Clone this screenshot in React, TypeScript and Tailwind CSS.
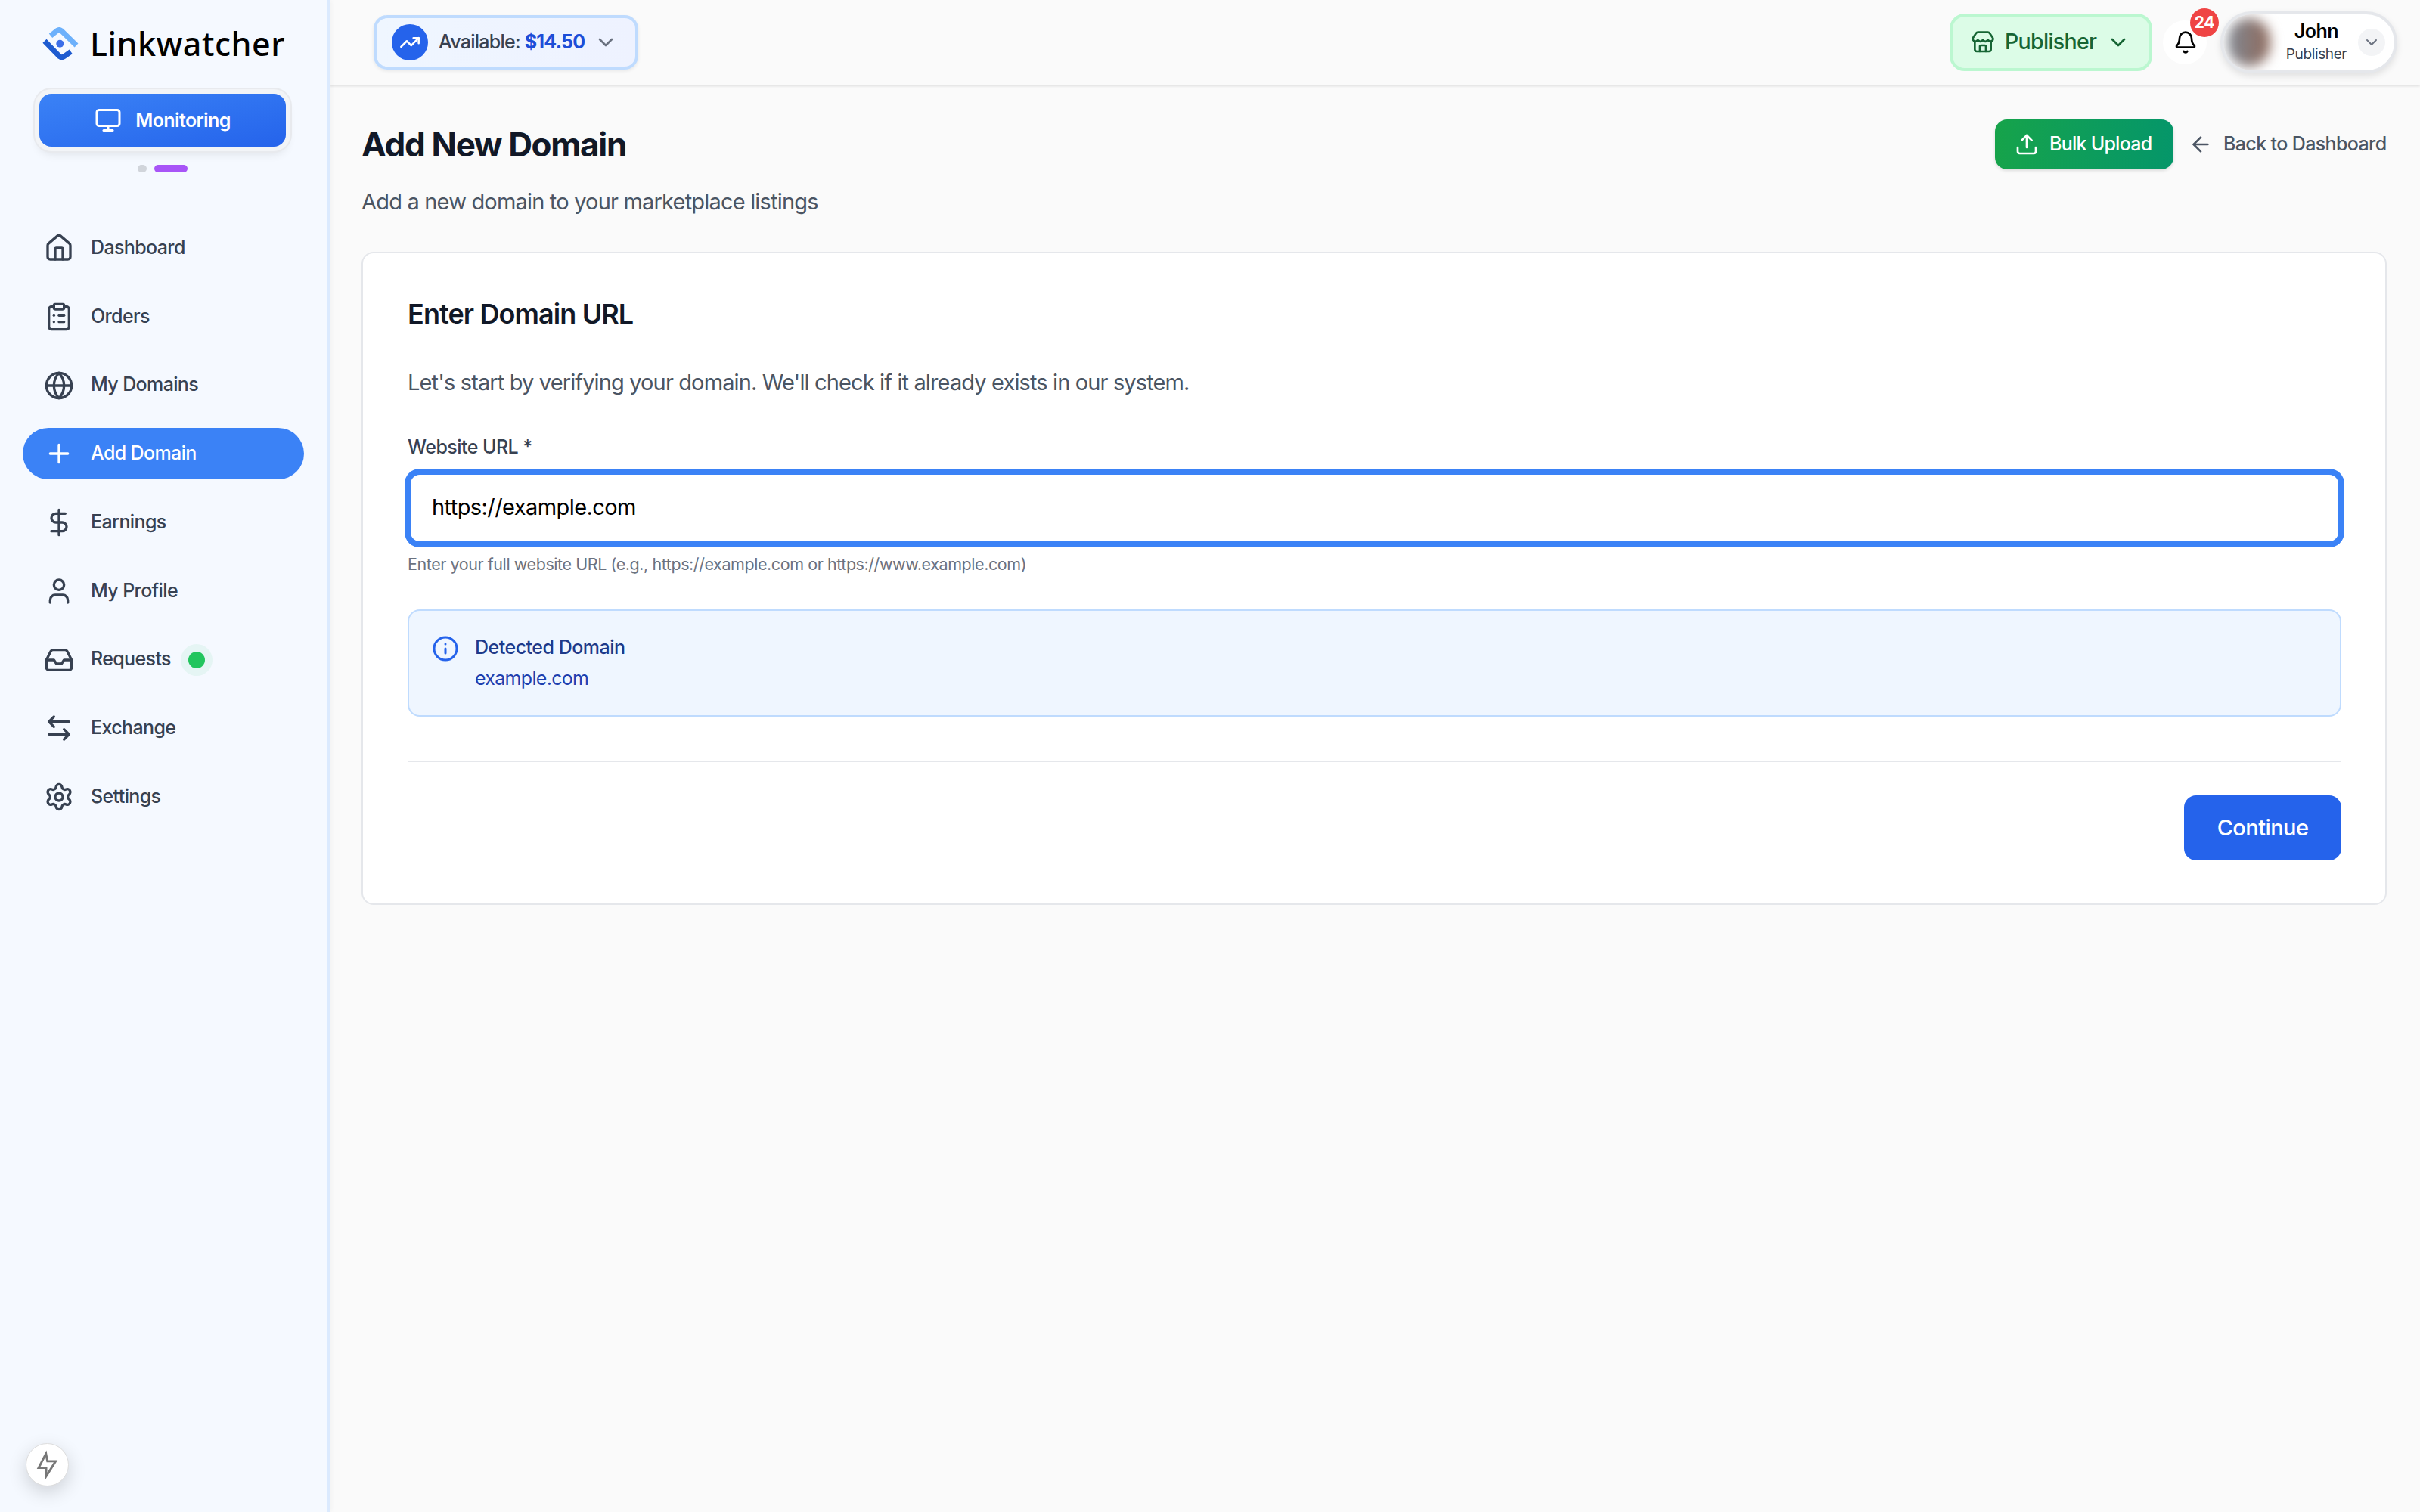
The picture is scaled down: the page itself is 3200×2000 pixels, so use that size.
import { House, ClipboardList, Globe, Plus, DollarSign, User, Inbox, ArrowLeftRight, Settings, Monitor, TrendingUp, ChevronDown, Store, Bell, Upload, ArrowLeft, Info } from "lucide-react";

const font = "[font-family:Inter,'Liberation_Sans',sans-serif]";

const nav = [
  { label: "Dashboard", Icon: House },
  { label: "Orders", Icon: ClipboardList },
  { label: "My Domains", Icon: Globe },
  { label: "Add Domain", Icon: Plus, active: true },
  { label: "Earnings", Icon: DollarSign },
  { label: "My Profile", Icon: User },
  { label: "Requests", Icon: Inbox, dot: true },
  { label: "Exchange", Icon: ArrowLeftRight },
  { label: "Settings", Icon: Settings },
];

function Logo() {
  return (
    <svg width="48" height="44" viewBox="0 0 48 44" fill="none">
      <path d="M11 11.3 L19.5 4.5 Q22.3 2.6 25 4.5 L45 24" stroke="#6db1fb" strokeWidth="7" />
      <path d="M3 18.3 L22.5 38.5 Q25.7 41 29 38.5 L37.7 32.3" stroke="#1e5bd0" strokeWidth="7" />
      <circle cx="23.3" cy="21.7" r="5" fill="#3b6ee8" />
    </svg>
  );
}

export default function App() {
  return (
    <div className={`flex h-[2000px] w-[3200px] overflow-hidden bg-[#fafafa] ${font}`}>
      <aside className="relative z-10 flex w-[436px] shrink-0 flex-col border-r-4 border-[#dbeafe] bg-[#f5f9ff] shadow-[2px_0_6px_rgba(0,0,0,0.04)]">
        <div className="flex h-[116px] items-start gap-[15px] pl-[56px] pt-[36px]">
          <Logo />
          <span className="text-[43px] leading-[44px] font-medium tracking-[0.012em] text-black [font-family:'Noto_Sans',sans-serif]">Linkwatcher</span>
        </div>
        <div className="px-[52px] pr-[54px] pt-[8px]">
          <div className="flex h-[70px] items-center justify-center gap-[18px] rounded-[16px] bg-gradient-to-br from-[#3b82f6] to-[#2563eb] text-white shadow-[0_0_0_6px_#f2f4f7,0_0_0_8px_#e8eaee,0_8px_14px_rgba(0,0,0,0.12)]">
            <Monitor size={36} strokeWidth={2} />
            <span className="pt-[2px] text-[25px] font-semibold tracking-[-0.025em]">Monitoring</span>
          </div>
        </div>
        <div className="flex justify-center gap-[10px] pr-[2px] pt-[24px]">
          <span className="h-[10px] w-[12px] rounded-full bg-[#d1d5db]" />
          <span className="h-[10px] w-[44px] rounded-full bg-[#a855f7]" />
        </div>
        <nav className="flex flex-col gap-[22.75px] pl-[30px] pr-[30px] pt-[66px]">
          {nav.map(({ label, Icon, active, dot }) => (
            <div key={label} className={`flex h-[68px] items-center gap-[22px] rounded-full pl-[28px] ${active ? "bg-[#3b82f6] text-white" : "text-[#374151]"}`}>
              <Icon size={40} strokeWidth={2} className="shrink-0" />
              <span className="pb-[1px] text-[25px] font-medium tracking-[-0.025em]">{label}</span>
              {dot && (
                <span className="-ml-[9px] flex h-[42px] w-[42px] items-center justify-center rounded-full bg-[#22c55e]/[0.07]">
                  <span className="h-[22px] w-[22px] rounded-full bg-[#22c55e]" />
                </span>
              )}
            </div>
          ))}
        </nav>
        <div className="absolute left-[34px] top-[1909px] flex h-[57px] w-[57px] items-center justify-center rounded-full border border-[#dddddd] bg-white shadow-[0_8px_24px_rgba(0,0,0,0.16)]">
          <svg width="57" height="57" viewBox="0 0 57 57" fill="none">
            <path d="M26.7 13.3 L16.7 32.7 H27 V44.3 L40 23.7 H28.7 Z" stroke="#777777" strokeWidth="3" />
          </svg>
        </div>
      </aside>

      <main className="flex min-w-0 flex-1 flex-col">
        <header className="flex h-[112px] shrink-0 items-center justify-between pl-[58px] pr-[30px] shadow-[0_2px_3px_rgba(0,0,0,0.12)]">
          <div className="flex h-[72px] w-[350px] items-center rounded-[18px] border-4 border-[#bfdbfe] bg-gradient-to-r from-[#eff6ff] to-[#eef2ff] pl-[20px] shadow-[0_2px_4px_rgba(0,0,0,0.08)]">
            <span className="flex h-[48px] w-[48px] shrink-0 items-center justify-center rounded-full bg-[#2563eb] text-white">
              <TrendingUp size={28} strokeWidth={2.2} />
            </span>
            <span className="ml-[14px] whitespace-nowrap text-[25px] font-medium tracking-[-0.03em] text-[#374151]">
              Available: <span className="font-bold text-[#1d4ed8]">$14.50</span>
            </span>
            <ChevronDown size={32} strokeWidth={2} className="ml-[12px] text-[#6b7280]" />
          </div>
          <div className="flex items-center">
            <div className="flex h-[76px] w-[268px] items-center rounded-[20px] border-4 border-[#bbf7d0] bg-[#dcfce7] pl-[24px] text-[#166534]">
              <Store size={32} strokeWidth={2} />
              <span className="ml-[13px] pb-[2px] text-[28.5px] font-medium tracking-[-0.025em]">Publisher</span>
              <ChevronDown size={32} strokeWidth={2} className="ml-[13px]" />
            </div>
            <div className="relative ml-[14px] flex h-[58px] w-[58px] items-center justify-center rounded-full bg-white pl-[2px] text-black">
              <Bell size={32} strokeWidth={2} />
              <span className="absolute left-[36px] top-[-16px] flex h-[38px] w-[38px] items-center justify-center rounded-full bg-[#ef4444] text-[21px] font-bold tracking-[-0.02em] text-white">24</span>
            </div>
            <div className="ml-[18px] flex h-[82px] w-[234px] items-center overflow-hidden rounded-full border-4 border-[#e5e7eb] bg-white shadow-[0_4px_10px_rgba(0,0,0,0.1)]">
              <span className="ml-[6px] h-[64px] w-[56px] shrink-0 rounded-full bg-gradient-to-r from-[#7f8791] to-[#8f6a5c] blur-[8px]" />
              <div className="ml-[18px] flex w-[86px] shrink-0 flex-col items-center">
                <span className="text-[25px] leading-[30px] font-semibold tracking-[-0.02em] text-black">John</span>
                <span className="mt-[2px] text-[19px] leading-[28px] tracking-[-0.02em] text-[#374151]">Publisher</span>
              </div>
              <span className="ml-[12px] flex h-[36px] w-[36px] shrink-0 items-center justify-center rounded-full bg-[#f3f4f6] text-[#6b7280]">
                <ChevronDown size={24} strokeWidth={2} />
              </span>
            </div>
          </div>
        </header>

        <div className="pl-[42px] pr-[44px] pt-[46px]">
          <div className="flex items-start justify-between">
            <div>
              <h1 className="text-[44px] leading-[66px] font-bold tracking-[-0.03em] text-[#111827]">Add New Domain</h1>
              <p className="mt-[23px] text-[29px] leading-[40px] tracking-[-0.028em] text-[#4b5563]">Add a new domain to your marketplace listings</p>
            </div>
            <div className="flex items-center">
              <div className="flex h-[66px] w-[236px] items-center rounded-[16px] bg-gradient-to-r from-[#16a34a] to-[#059669] pl-[26px] text-white shadow-[0_2px_4px_rgba(0,0,0,0.12)]">
                <Upload size={32} strokeWidth={2} />
                <span className="ml-[14px] pb-[1px] text-[25px] font-medium tracking-[-0.03em]">Bulk Upload</span>
              </div>
              <div className="ml-[20px] flex w-[262px] items-center text-[#4b5563]">
                <ArrowLeft size={32} strokeWidth={2} />
                <span className="ml-[14px] whitespace-nowrap pb-[1px] text-[25px] font-medium tracking-[-0.025em]">Back to Dashboard</span>
              </div>
            </div>
          </div>

          <section className="mt-[46px] rounded-[16px] border-2 border-[#e5e7eb] bg-white pb-[57px] pl-[59px] pr-[58px] pt-[57px]">
            <h2 className="text-[36px] leading-[46px] pb-[2px] font-semibold tracking-[-0.025em] text-[#111827]">Enter Domain URL</h2>
            <p className="mt-[46px] text-[29px] leading-[40px] tracking-[-0.03em] text-[#4b5563]">Let's start by verifying your domain. We'll check if it already exists in our system.</p>
            <label className="mt-[49px] block text-[25px] leading-[32px] font-medium tracking-[-0.022em] text-[#374151]">Website URL *</label>
            <input
              readOnly
              value="https://example.com"
              className="mt-[17px] block h-[96px] w-full rounded-[16px] border-4 border-[#3b82f6] bg-white px-[28px] pb-[4px] text-[29px] tracking-[-0.02em] text-black shadow-[0_0_0_4px_#3b82f6] outline-none"
            />
            <p className="mt-[12px] text-[21.5px] leading-[28px] pb-[2px] tracking-[-0.02em] text-[#6b7280]">Enter your full website URL (e.g., https://example.com or https://www.example.com)</p>
            <div className="mt-[44px] flex h-[142px] items-start gap-[21px] rounded-[16px] border-2 border-[#bfdbfe] bg-[#eff6ff] pl-[30px] pt-[30px]">
              <Info size={36} strokeWidth={2} className="mt-[2px] shrink-0 text-[#2563eb]" />
              <div>
                <div className="text-[25px] leading-[36px] font-medium tracking-[-0.02em] text-[#1e3a8a]">Detected Domain</div>
                <div className="mt-[5px] text-[25px] leading-[36px] tracking-[-0.028em] text-[#1e40af]">example.com</div>
              </div>
            </div>
            <div className="mt-[58px] border-t-2 border-[#e5e7eb]" />
            <div className="mt-[44px] flex justify-end">
              <div className="flex h-[86px] w-[208px] items-center justify-center rounded-[16px] bg-[#2563eb] text-[29px] font-medium tracking-[-0.02em] text-white">Continue</div>
            </div>
          </section>
        </div>
      </main>
    </div>
  );
}
